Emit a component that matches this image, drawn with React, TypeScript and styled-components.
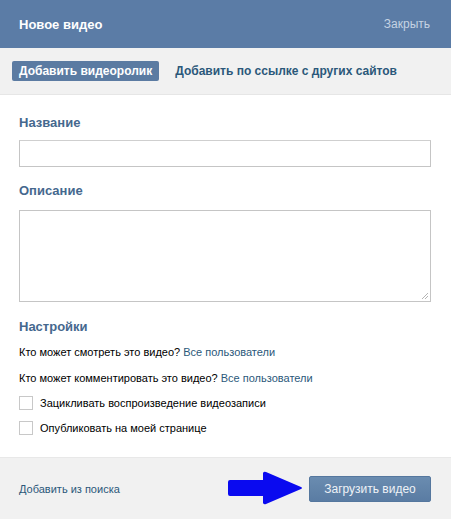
import React from "react";
import styled, { createGlobalStyle } from "styled-components";

const Global = createGlobalStyle`
  html, body { margin: 0; padding: 0; background: #ffffff; }
  body { font-family: Tahoma, "Liberation Sans", Arial, sans-serif; font-size: 11px; color: #000; }
  * { box-sizing: border-box; }
`;

const Box = styled.div`
  width: 451px;
  height: 519px;
  display: flex;
  flex-direction: column;
  background: #fff;
`;

const Header = styled.div`
  height: 48px;
  background: #5b7ca6;
  display: flex;
  align-items: center;
  justify-content: space-between;
  padding: 0 21px 0 19px;
`;

const Title = styled.div`
  color: #fff;
  font-weight: bold;
  font-size: 13px;
`;

const Close = styled.div`
  color: #c5d3e3;
  font-size: 12px;
`;

const Tabs = styled.div`
  height: 47px;
  background: #f1f1f1;
  border-bottom: 1px solid #e6e6e6;
  display: flex;
  align-items: center;
  padding: 0 12px;
  gap: 9px;
`;

const Tab = styled.div<{ $active?: boolean }>`
  height: 20px;
  display: flex;
  align-items: center;
  padding: 0 7px;
  border-radius: 2px;
  font-weight: bold;
  font-size: 12px;
  background: ${(p) => (p.$active ? "#5b7ba2" : "transparent")};
  color: ${(p) => (p.$active ? "#ffffff" : "#2b587a")};
`;

const Body = styled.div`
  flex: 1;
  display: flex;
  flex-direction: column;
  padding: 20px 20px 0 19px;
`;

const Label = styled.div<{ $top?: number }>`
  color: #45688e;
  font-weight: bold;
  font-size: 13px;
  margin-top: ${(p) => p.$top ?? 0}px;
  line-height: 15px;
`;

const Input = styled.div`
  margin-top: 10px;
  height: 27px;
  border: 1px solid #c5c5c5;
  border-top-color: #cfcfcf;
  background: #fff;
`;

const Area = styled.div`
  margin-top: 12px;
  height: 92px;
  border: 1px solid #c5c5c5;
  background: #fff;
  position: relative;
`;

const Grip = styled.svg`
  position: absolute;
  right: 1px;
  bottom: 1px;
`;

const Line = styled.div<{ $top: number }>`
  margin-top: ${(p) => p.$top}px;
  line-height: 14px;
  font-size: 11px;
  color: #000;
`;

const Link = styled.span`
  color: #2b587a;
`;

const CheckRow = styled.div<{ $top: number }>`
  margin-top: ${(p) => p.$top}px;
  display: flex;
  align-items: center;
  gap: 7px;
  font-size: 11px;
  color: #000;
`;

const Check = styled.span`
  width: 14px;
  height: 14px;
  border: 1px solid #c8c8c8;
  background: #fff;
  display: inline-block;
`;

const Footer = styled.div`
  height: 62px;
  background: #f1f1f1;
  border-top: 1px solid #e8e8e8;
  display: flex;
  align-items: center;
  justify-content: space-between;
  padding: 0 20px 0 19px;
`;

const FootLink = styled.div`
  color: #2b587a;
  font-size: 11px;
`;

const Right = styled.div`
  display: flex;
  align-items: center;
  gap: 6px;
  margin-left: auto;
`;

const Button = styled.div`
  width: 122px;
  height: 26px;
  border-radius: 2px;
  background: linear-gradient(#6a8cb0, #5a7ca3);
  border: 1px solid #55779e;
  color: #eef2f7;
  font-size: 12px;
  display: flex;
  align-items: center;
  justify-content: center;
`;

export default function App() {
  return (
    <>
      <Global />
      <Box>
        <Header>
          <Title>Новое видео</Title>
          <Close>Закрыть</Close>
        </Header>
        <Tabs>
          <Tab $active>Добавить видеоролик</Tab>
          <Tab>Добавить по ссылке с других сайтов</Tab>
        </Tabs>
        <Body>
          <Label>Название</Label>
          <Input />
          <Label $top={16}>Описание</Label>
          <Area>
            <Grip width="9" height="9" viewBox="0 0 9 9">
              <path d="M8 2 L2 8 M8 5 L5 8" stroke="#b5b5b5" strokeWidth="1" />
            </Grip>
          </Area>
          <Label $top={17}>Настройки</Label>
          <Line $top={11}>
            Кто может смотреть это видео? <Link>Все пользователи</Link>
          </Line>
          <Line $top={12}>
            Кто может комментировать это видео? <Link>Все пользователи</Link>
          </Line>
          <CheckRow $top={11}>
            <Check />
            Зацикливать воспроизведение видеозаписи
          </CheckRow>
          <CheckRow $top={11}>
            <Check />
            Опубликовать на моей странице
          </CheckRow>
        </Body>
        <Footer>
          <FootLink>Добавить из поиска</FootLink>
          <Right>
            <svg width="75" height="35" viewBox="0 0 75 35">
              <path
                d="M2 9 L35 9 L35 2 Q36 0 38 1 L73 16 Q75 17 73 18 L38 33 Q36 34 35 32 L35 25 L2 25 Q0 25 0 23 L0 11 Q0 9 2 9 Z"
                fill="#0a0af0"
              />
            </svg>
            <Button>Загрузить видео</Button>
          </Right>
        </Footer>
      </Box>
    </>
  );
}
